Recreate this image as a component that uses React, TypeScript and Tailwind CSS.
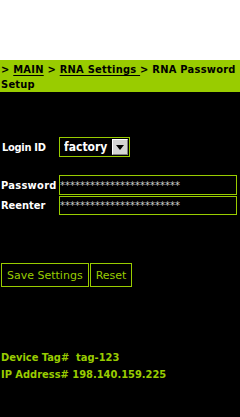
import { ChangeEvent, useState } from "react";

const green = "text-[#99cc00]";
const boldFont = "font-['DejaVu_Sans_Condensed','DejaVu_Sans',sans-serif] font-bold";

export default function App() {
  const [login, setLogin] = useState("factory");
  const [pass, setPass] = useState("************************");
  const [again, setAgain] = useState("************************");

  return (
    <div className="w-[240px] h-[417px] bg-black font-['DejaVu_Sans',sans-serif] text-[11px] leading-[15px] overflow-hidden">
      <div className="h-[60px] bg-white" />
      <div className={`bg-[#99cc00] text-black ${boldFont} tracking-[0.25px] px-[1px] pt-[2px] pb-0 h-[32px]`}>
        <div className="whitespace-nowrap">
          &gt; <span className="underline underline-offset-2">MAIN</span> &gt;{" "}
          <span className="underline underline-offset-2">RNA Settings </span>&gt; RNA Password
        </div>
        <div>Setup</div>
      </div>

      <div className="mt-[45px] flex items-center h-[20px]">
        <span className={`w-[59px] pl-[2px] text-white ${boldFont} tracking-[-0.3px]`}>Login ID</span>
        <div className="flex items-center h-[20px] w-[71px] border border-[#99cc00] bg-black">
          <select
            value={login}
            onChange={(e: ChangeEvent<HTMLSelectElement>) => setLogin(e.target.value)}
            className={`appearance-none bg-black text-white pl-[4px] w-[53px] h-[18px] outline-none ${boldFont} text-[12px]`}
          >
            <option>factory</option>
            <option>admin</option>
          </select>
          <div className="w-[16px] h-[16px] ml-auto mr-[1px] bg-[#d4d4d4] border border-t-white border-l-white border-r-[#808080] border-b-[#808080] flex items-center justify-center">
            <div className="w-0 h-0 border-l-[4px] border-r-[4px] border-t-[5px] border-l-transparent border-r-transparent border-t-black" />
          </div>
        </div>
      </div>

      <div className="mt-[18px] flex items-center h-[20px]">
        <span className={`w-[59px] pl-[1px] text-white ${boldFont} tracking-[0.3px]`}>Password</span>
        <input
          value={pass}
          onChange={(e: ChangeEvent<HTMLInputElement>) => setPass(e.target.value)}
          className="w-[178px] h-[20px] border border-[#99cc00] bg-black text-[#d0d0d0] text-[10px] px-0 outline-none"
        />
      </div>
      <div className="mt-[1px] flex items-center h-[19px]">
        <span className={`w-[59px] pl-[1px] text-white ${boldFont}`}>Reenter</span>
        <input
          value={again}
          onChange={(e: ChangeEvent<HTMLInputElement>) => setAgain(e.target.value)}
          className="w-[178px] h-[19px] border border-[#99cc00] bg-black text-[#d0d0d0] text-[10px] px-0 outline-none"
        />
      </div>

      <div className="mt-[48px] flex gap-[1px] pl-[1px]">
        <button className={`h-[24px] px-[5px] border border-[#99cc00] bg-black ${green}`}>Save Settings</button>
        <button className={`h-[24px] px-[5px] border border-[#99cc00] bg-black ${green}`}>Reset</button>
      </div>

      <div className={`mt-[62px] pl-[1px] ${boldFont} ${green} leading-[17px]`}>
        <div>Device Tag#&nbsp; tag-123</div>
        <div>IP Address# 198.140.159.225</div>
      </div>
    </div>
  );
}
